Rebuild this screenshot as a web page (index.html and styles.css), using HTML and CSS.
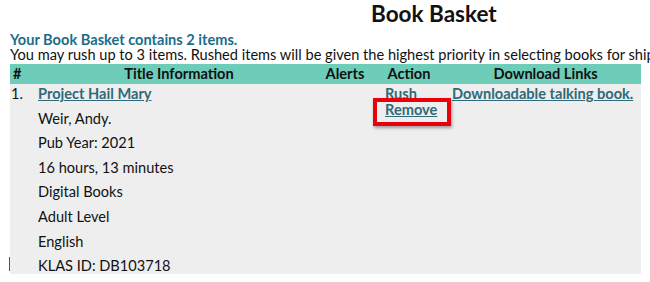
FILE: index.html
```html
<!DOCTYPE html>
<html lang="en">
<head>
<meta charset="utf-8">
<title>Book Basket</title>
<link rel="stylesheet" href="styles.css">
</head>
<body>
<div class="page">
  <h1 class="title">Book Basket</h1>
  <p class="count">Your Book Basket contains 2 items.</p>
  <p class="note">You may rush up to 3 items. Rushed items will be given the highest priority in selecting books for shipment.</p>
  <div class="basket">
    <div class="row head">
      <div class="c-num">#</div>
      <div class="c-title">Title Information</div>
      <div class="c-alerts">Alerts</div>
      <div class="c-action">Action</div>
      <div class="c-dl">Download Links</div>
    </div>
    <div class="row item">
      <div class="c-num">1.</div>
      <div class="c-title">
        <a class="link" href="#">Project Hail Mary</a>
        <div class="detail">Weir, Andy.</div>
        <div class="detail">Pub Year: 2021</div>
        <div class="detail">16 hours, 13 minutes</div>
        <div class="detail">Digital Books</div>
        <div class="detail">Adult Level</div>
        <div class="detail">English</div>
        <div class="detail last">KLAS ID: DB103718</div>
      </div>
      <div class="c-alerts"></div>
      <div class="c-action">
        <a class="link" href="#">Rush</a>
        <span class="highlight"><a class="link" href="#">Remove</a></span>
      </div>
      <div class="c-dl"><a class="link" href="#">Downloadable talking book.</a></div>
    </div>
  </div>
</div>
</body>
</html>
```

FILE: styles.css
```css
html, body {
  margin: 0;
  padding: 0;
  overflow: hidden;
  background: #ffffff;
}

body {
  font-family: Lato, "Open Sans", sans-serif;
  font-size: 14.6px;
  color: #111111;
}

.page {
  width: 631px;
  margin-left: 10px;
}

.title {
  margin: 0;
  padding: 1px 0 0 361px;
  font-size: 22.5px;
  line-height: 26px;
  font-weight: 700;
  color: #111111;
}

.count {
  margin: 5px 0 0;
  font-weight: 700;
  color: #1b6d89;
  line-height: 15px;
}

.note {
  margin: 0;
  line-height: 15px;
  white-space: nowrap;
}

.basket {
  margin-top: 2px;
}

.row {
  display: grid;
  grid-template-columns: 26px 286px 46px 82px 191px;
}

.head {
  background: #6dcdb9;
  height: 20px;
  line-height: 20px;
  font-weight: 700;
  text-align: center;
}

.head .c-num {
  text-align: left;
  padding-left: 3px;
}

.item {
  background: #eeeeee;
  padding: 2px 0 0;
  height: 188px;
  line-height: 16px;
}

.item .c-num {
  padding-left: 1px;
}

.item .c-title {
  padding-left: 2px;
  display: flex;
  flex-direction: column;
  align-items: flex-start;
}

.detail {
  margin-top: 8.6px;
}

.link {
  color: #2e6a7a;
  font-weight: 700;
  text-decoration: underline;
}

.item .c-action {
  padding-left: 17px;
  display: flex;
  flex-direction: column;
  align-items: flex-start;
}

.item .c-dl {
  padding-left: 2px;
}

.highlight {
  position: relative;
  display: inline-block;
}

.highlight::after {
  content: "";
  position: absolute;
  left: -12px;
  right: -14px;
  top: -4px;
  bottom: -8px;
  border: 4px solid #e8000b;
  box-shadow: 1px 2px 3px rgba(0, 0, 0, 0.35);
}

.last {
  position: relative;
}

.last::before {
  content: "";
  position: absolute;
  left: -29px;
  top: -1px;
  width: 1px;
  height: 14px;
  background: #555555;
}
```
